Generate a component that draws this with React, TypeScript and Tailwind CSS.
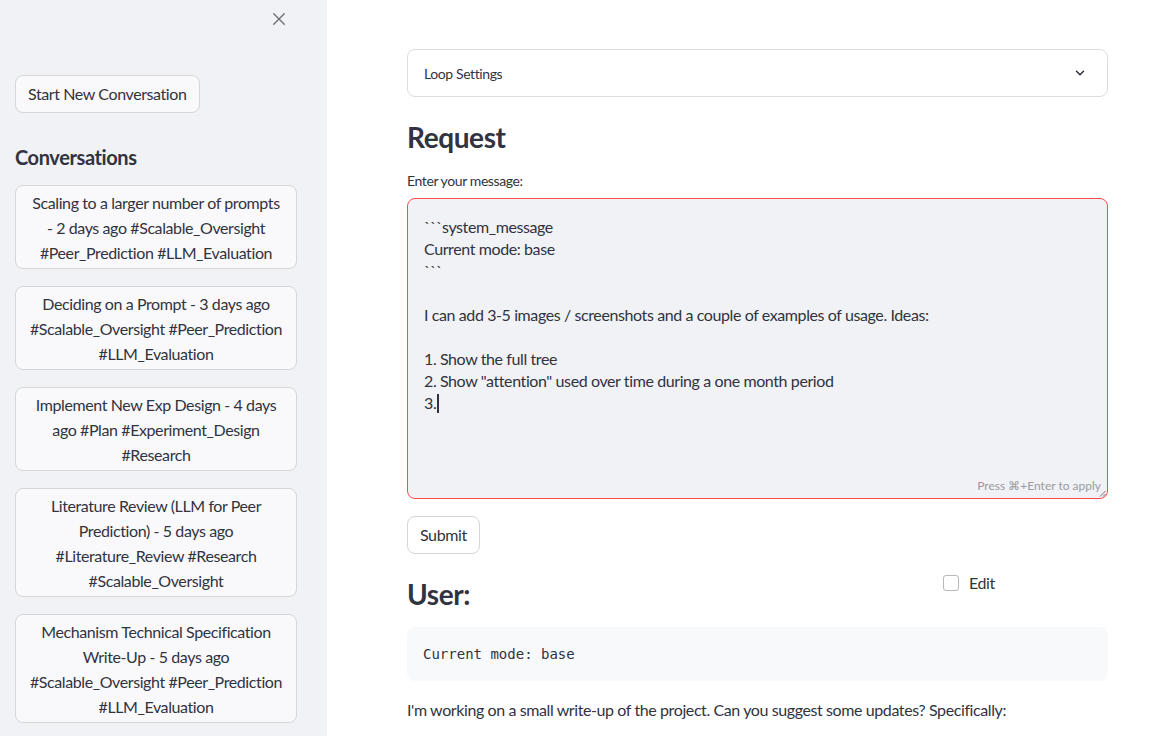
import React from 'react';

const conversations = [
  ['Scaling to a larger number of prompts', '- 2 days ago #Scalable_Oversight', '#Peer_Prediction #LLM_Evaluation'],
  ['Deciding on a Prompt - 3 days ago', '#Scalable_Oversight #Peer_Prediction', '#LLM_Evaluation'],
  ['Implement New Exp Design - 4 days', 'ago #Plan #Experiment_Design', '#Research'],
  ['Literature Review (LLM for Peer', 'Prediction) - 5 days ago', '#Literature_Review #Research', '#Scalable_Oversight'],
  ['Mechanism Technical Specification', 'Write-Up - 5 days ago', '#Scalable_Oversight #Peer_Prediction', '#LLM_Evaluation'],
];

const Sidebar = () => (
  <aside className="w-[327px] shrink-0 h-[736px] overflow-hidden bg-[#f0f2f6] px-[15px]">
    <div className="flex justify-end pt-[10px] pr-[24px]">
      <svg width="18" height="18" viewBox="0 0 24 24" fill="none" stroke="#6b6d76" strokeWidth="1.8" strokeLinecap="round">
        <path d="M5 5l14 14M19 5L5 19" />
      </svg>
    </div>

    <button className="mt-[47px] h-[38px] px-[12px] rounded-lg border border-[#d6d6d9] bg-[#f9f9fb] text-[16px] text-[#31333f]">
      Start New Conversation
    </button>

    <h3 className="mt-[32px] text-[20px] font-bold text-[#31333f] leading-[24px]">Conversations</h3>

    <div className="mt-[16px] flex flex-col gap-[17px]">
      {conversations.map((lines, i) => (
        <button
          key={i}
          className="w-[282px] rounded-lg border border-[#d6d6d9] bg-[#f9f9fb] py-[3.5px] text-[16px] leading-[25px] text-[#31333f] text-center"
        >
          {lines.map((l, j) => (
            <div key={j} className="whitespace-nowrap">{l}</div>
          ))}
        </button>
      ))}
    </div>
  </aside>
);

const App = () => {
  return (
    <div
      className="flex w-[1164px] h-[736px] overflow-hidden bg-white text-[#31333f] tracking-[-0.4px]"
      style={{ fontFamily: 'Lato, "Noto Sans", sans-serif' }}
    >
      <Sidebar />

      <main className="flex-1 pl-[80px] pt-[49px]">
        <div className="w-[701px]">
          {/* Loop settings expander */}
          <div className="h-[48px] rounded-lg border border-[#dcdde1] flex items-center justify-between pl-[16px] pr-[20px]">
            <span className="text-[14px]">Loop Settings</span>
            <svg width="14" height="14" viewBox="0 0 24 24" fill="none" stroke="#31333f" strokeWidth="2.6" strokeLinecap="round" strokeLinejoin="round">
              <path d="M6 9l6 6 6-6" />
            </svg>
          </div>

          <h2 className="mt-[23px] text-[28px] font-bold leading-[34px]">Request</h2>

          <div className="mt-[19px] text-[14px] leading-[16px]">Enter your message:</div>

          {/* Textarea */}
          <div className="mt-[9px] relative h-[301px] rounded-lg border border-[#ff4b4b] bg-[#f0f2f6] px-[16px] pt-[17px] text-[16px] leading-[22px]">
            <div>```system_message</div>
            <div>Current mode: base</div>
            <div>```</div>
            <div>&nbsp;</div>
            <div>I can add 3-5 images / screenshots and a couple of examples of usage. Ideas:</div>
            <div>&nbsp;</div>
            <div>1. Show the full tree</div>
            <div>2. Show "attention" used over time during a one month period</div>
            <div className="flex items-center">3.<span className="inline-block w-[1.5px] h-[19px] bg-[#31333f] ml-[1px]" /></div>
            <span className="absolute right-[6px] bottom-[1px] text-[12px] tracking-normal text-[#9a9ba1]">Press ⌘+Enter to apply</span>
            <svg className="absolute right-[1px] bottom-[1px]" width="7" height="7" viewBox="0 0 7 7" stroke="#555" strokeWidth="0.8">
              <path d="M6.5 1L1 6.5M6.5 4L4 6.5" />
            </svg>
          </div>

          <button className="mt-[17px] h-[38px] px-[12px] rounded-lg border border-[#d6d6d9] bg-white text-[16px]">
            Submit
          </button>

          <div className="mt-[18px] flex items-start">
            <h2 className="text-[28px] font-bold leading-[44px] w-[536px]">User:</h2>
            <label className="flex items-center gap-[10px] mt-[-1px]">
              <span className="w-[16px] h-[16px] rounded-[3px] border border-[#b7b8bd] bg-white" />
              <span className="text-[16px]">Edit</span>
            </label>
          </div>

          <div className="mt-[11px] h-[54px] rounded-lg bg-[#f8f9fb] flex items-center px-[16px]">
            <span className="text-[14px] tracking-normal" style={{ fontFamily: '"DejaVu Sans Mono", monospace' }}>Current mode: base</span>
          </div>

          <p className="mt-[17px] text-[16px] leading-[24px]">
            I'm working on a small write-up of the project. Can you suggest some updates? Specifically:
          </p>
        </div>
      </main>
    </div>
  );
};

export default App;
